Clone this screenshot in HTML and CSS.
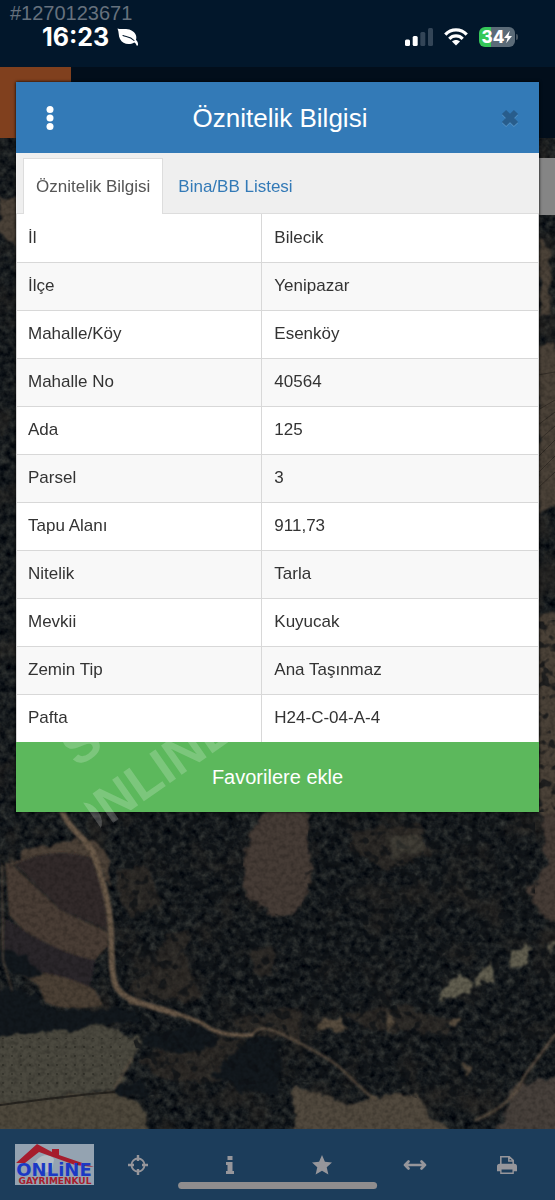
FILE: index.html
```html
<!DOCTYPE html>
<html lang="tr">
<head>
<meta charset="utf-8">
<meta name="viewport" content="width=device-width, initial-scale=1">
<title>Öznitelik Bilgisi</title>
<link rel="stylesheet" href="styles.css">
</head>
<body>
<div class="app">
  <header class="status">
    <span class="listing-no">#1270123671</span>
    <div class="status-row">
      <div class="clock">
        <span>16:23</span>
        <svg class="leaf" viewBox="0 0 22 18" aria-hidden="true"><path d="M.5.5C4 2 9 0 14 2.200C19 4.500 20 8.500 19 12C20.500 13 21.300 15 21 17.500L19.500 17.500C19.300 16 18.500 15 17.300 14.500C12 17.500 5.500 16 3 11C1.200 7.500 2.200 4 .5.5Z" fill="#fff"/><path d="M6 7.500C9 9 13 8 17 12.500" fill="none" stroke="#02172b" stroke-width="1.100" stroke-linecap="round"/></svg>
      </div>
      <div class="indicators">
        <svg class="signal" viewBox="0 0 28 18" aria-hidden="true"><rect y="11.500" width="5" height="6.500" rx="1.500" fill="#fff"/><rect x="7.700" y="8" width="5" height="10" rx="1.500" fill="#fff"/><rect x="15.300" y="4" width="5" height="14" rx="1.500" fill="#334557"/><rect x="23" width="5" height="18" rx="1.500" fill="#334557"/></svg>
        <svg class="wifi" viewBox="0 0 24 18" aria-hidden="true"><g fill="none" stroke="#fff" stroke-width="3.200"><path d="M1.300 6.600C7.200.3 16.800.3 22.700 6.600"/><path d="M5.300 10.800C9 7 15 7 18.700 10.800"/></g><path d="M8 13.600C10.300 11.600 13.700 11.600 16 13.600L12 17.600Z" fill="#fff"/></svg>
        <div class="battery"><span>34</span><svg viewBox="0 0 9 14" aria-hidden="true"><path d="M6.500 0L0 8H4L2.500 14L9 6H5Z" fill="#fff"/></svg></div>
      </div>
    </div>
  </header>

  <main class="stage">
    <svg class="map" viewBox="0 67 555 1062" preserveAspectRatio="xMidYMin slice" aria-hidden="true">
      <defs>
        <filter id="forest" x="0" y="0" width="100%" height="100%" color-interpolation-filters="sRGB">
          <feTurbulence type="fractalNoise" baseFrequency=".14" numOctaves="3" seed="7"/>
          <feColorMatrix values=".3 0 0 0 -.055  .29 0 0 0 -.033  .24 0 0 0 .003  0 0 0 0 1"/>
          <feGaussianBlur stdDeviation=".7"/>
        </filter>
        <filter id="patches" x="0" y="0" width="100%" height="100%" color-interpolation-filters="sRGB">
          <feTurbulence type="fractalNoise" baseFrequency=".025" numOctaves="4" seed="12"/>
          <feColorMatrix values="0 0 0 0 .19  0 0 0 0 .17  0 0 0 0 .15  3.500 0 0 0 -1.800"/>
        </filter>
        <filter id="trees" x="0" y="0" width="100%" height="100%" color-interpolation-filters="sRGB">
          <feTurbulence type="fractalNoise" baseFrequency=".1" numOctaves="2" seed="21"/>
          <feColorMatrix values="0 0 0 0 .055  0 0 0 0 .07  0 0 0 0 .085  7 0 0 0 -3.700"/>
          <feComposite in2="SourceGraphic" operator="in"/>
        </filter>
        <filter id="rough" x="-10%" y="-10%" width="120%" height="120%" color-interpolation-filters="sRGB">
          <feTurbulence type="fractalNoise" baseFrequency=".09" numOctaves="3" seed="3" result="n"/>
          <feDisplacementMap in="SourceGraphic" in2="n" scale="14" xChannelSelector="R" yChannelSelector="G"/>
          <feGaussianBlur stdDeviation="1"/>
        </filter>
        <filter id="soft"><feGaussianBlur stdDeviation=".8"/></filter>
        <filter id="grain" x="0" y="0" width="100%" height="100%" color-interpolation-filters="sRGB">
          <feTurbulence type="fractalNoise" baseFrequency=".22" numOctaves="2" seed="5"/>
          <feColorMatrix values="0 0 0 0 0  0 0 0 0 0  0 0 0 0 0  1.200 0 0 0 -.45"/>
        </filter>
        <pattern id="orchard" width="9" height="9" patternUnits="userSpaceOnUse"><circle cx="3" cy="3" r=".9" fill="#26261f"/></pattern>
      </defs>
      <rect y="67" width="555" height="1062" filter="url(#forest)"/>
      <rect y="67" width="555" height="1062" filter="url(#patches)" opacity=".55"/>
      <g filter="url(#rough)">
        <g fill="#3a322c" opacity=".6">
          <path d="M120 870L145 865L160 900L135 920L118 900ZM165 935L190 930L185 960L200 1000L155 1000L125 992L150 970ZM180 1030L245 1040L255 1065L215 1085L165 1080L140 1060ZM350 830L420 825L430 855L390 870L350 850ZM340 1015L400 1005L450 1020L445 1035L380 1030Z"/>
          <path d="M250 950L275 950L275 975L255 975ZM235 1020L300 1005L300 1040L250 1035Z"/>
        </g>
        <g fill="#463c36">
          <path d="M250 828L278 800L305 800L312 868L309 893L290 915L278 915L245 895L243 865Z"/>
          <path d="M542 800L560 800L560 922L539 918L528 890L546 870Z"/>
          <path d="M0 195L18 200L18 245L0 235ZM538 235L551 250L550 315L538 320ZM538 345L560 345L560 500L538 515ZM538 620L560 610L560 812L538 812Z" fill="#4b4238"/>
        </g>
        <path d="M8 862C30 845 70 840 90 840L105 850L112 890L100 868L60 855L20 868Z" fill="#4d4238"/>
      </g>
      <g filter="url(#soft)">
        <path d="M15 864C45 850 70 851 92 858L105 895L108 930L60 910Z" fill="#302a2a"/>
        <path d="M5 862L14 866L60 910L108 932L108 946L95 960C60 955 30 940 9 915Z" fill="#483e34"/>
        <path d="M3 918C25 930 55 952 95 960L90 985L101 1001L60 980L20 968L3 950Z" fill="#2c2629"/>
        <path d="M20 973C50 970 75 980 95 990L103 1005C80 1010 60 1010 45 1002L38 985Z" fill="#4b4035"/>
      </g>
      <g filter="url(#rough)">
        <path d="M-5 1037L70 1028L105 1028L142 1040L117 1090L-5 1105Z" fill="#4b493f"/>
        <path d="M-5 1105L115 1092L142 1104L150 1140L-5 1140Z" fill="#4e483c"/>
        <path d="M293 1086L345 1103L417 1092L424 1110L462 1140L293 1140Z" fill="#51493e"/>
        <path d="M513 1087L560 1076L560 1140L497 1140Z" fill="#47403b"/>
      </g>
      <path d="M0 1038H130L113 1084L0 1098Z" fill="url(#orchard)" opacity=".7"/>
      <path d="M0 1105C40 1100 80 1094 115 1092" fill="none" stroke="#282520" stroke-width="2"/>
      <g fill="none" stroke="#2f2923" opacity=".8"><path d="M538 375L555 372M538 410L555 400M538 425L555 412M538 441L555 426M538 457L555 440M538 473L555 456M538 488L555 472"/></g>
      <g filter="url(#rough)" fill="#12181d"><path d="M-5 950L22 955L40 970L35 978L10 970ZM8 985L35 995L50 1010L140 1010L138 1022L60 1030L-5 1037L-5 995ZM118 1085L145 1080L145 1098L120 1095Z"/><path d="M160 1030L205 1025L220 1040L200 1052L160 1050L135 1045ZM210 1075L255 1035L278 1040L278 1095L240 1090Z"/></g>
      <path d="M125 812H240L245 900L290 920L535 925L555 945V1030L500 1090L430 1100L290 1080L150 1095L115 980ZM310 812H535V925H300ZM538 620H555V812H538Z" filter="url(#trees)" opacity=".7"/>
      <g filter="url(#rough)">
        <path d="M322 1018L342 1018L342 1030L320 1030ZM384 1012L394 1024L388 1034ZM446 1020L460 1020L456 1028ZM464 1064L472 1068L467 1077Z" fill="#574c3e"/>
        <g fill="#625f50">
          <path d="M438 994L460 974L470 982L468 992L446 1000ZM476 978L495 958L494 984L473 987ZM507 958L528 944L524 966L510 970ZM547 945L556 942L554 952Z"/>
          <path d="M390 838L427 836L424 848L392 858Z" opacity=".35"/>
        </g>
      </g>
      <g filter="url(#soft)" fill="none" stroke="#6a5a49" stroke-linecap="round" stroke-linejoin="round">
        <path d="M62 811C70 832 88 838 95 857C101 878 108 895 110 920C113 945 109 973 117 988C126 1002 150 1005 176 1014" stroke-width="6"/>
        <path d="M130 1002C160 1007 180 1014 202 1023C215 1035 235 1036 252 1035" stroke-width="4"/>
        <path d="M252 1035C260 1020 280 1032 325 1057C345 1068 355 1085 373 1098M476 1120C500 1110 515 1098 525 1075L555 1035" stroke-width="3" opacity=".7"/>
        <path d="M115 1088L132 1058M2 865L3 960L12 990" stroke-width="2" opacity=".6"/>
      </g>
      <rect y="138" width="555" height="991" filter="url(#grain)" opacity=".4"/>
      <rect y="67" width="555" height="71" fill="#020e1b"/>
      <rect y="67" width="71" height="71" fill="#80401e"/>
      <rect x="539" y="158" width="16" height="57" fill="#858585"/>
    </svg>

    <section class="dialog" aria-labelledby="dialog-title">
      <div class="dialog-head">
        <button class="icon-button" type="button" aria-label="Menü"><svg class="dots" viewBox="0 0 8 24" aria-hidden="true"><g fill="#fff"><circle cx="4" cy="3.500" r="3.500"/><circle cx="4" cy="12" r="3.500"/><circle cx="4" cy="20.500" r="3.500"/></g></svg></button>
        <h1 id="dialog-title">Öznitelik Bilgisi</h1>
        <button class="icon-button" type="button" aria-label="Kapat"><svg class="close" viewBox="0 0 20 20" aria-hidden="true"><path d="M4 5L16 17M16 5L4 17" stroke="#5794c6" stroke-width="6"/><path d="M4 4L16 16M16 4L4 16" stroke="#285d8c" stroke-width="6"/></svg></button>
      </div>
      <nav class="tabs">
        <a class="tab active" href="#oznitelik" aria-current="page">Öznitelik Bilgisi</a>
        <a class="tab" href="#bina">Bina/BB Listesi</a>
      </nav>
      <table class="attributes" id="oznitelik">
        <tbody>
          <tr><th scope="row">İl</th><td>Bilecik</td></tr>
          <tr><th scope="row">İlçe</th><td>Yenipazar</td></tr>
          <tr><th scope="row">Mahalle/Köy</th><td>Esenköy</td></tr>
          <tr><th scope="row">Mahalle No</th><td>40564</td></tr>
          <tr><th scope="row">Ada</th><td>125</td></tr>
          <tr><th scope="row">Parsel</th><td>3</td></tr>
          <tr><th scope="row">Tapu Alanı</th><td>911,73</td></tr>
          <tr><th scope="row">Nitelik</th><td>Tarla</td></tr>
          <tr><th scope="row">Mevkii</th><td>Kuyucak</td></tr>
          <tr><th scope="row">Zemin Tip</th><td>Ana Taşınmaz</td></tr>
          <tr><th scope="row">Pafta</th><td>H24-C-04-A-4</td></tr>
        </tbody>
      </table>
      <div class="dialog-foot">
        <button class="favorite" type="button">Favorilere ekle</button>
        <svg class="watermark" viewBox="0 0 240 100" aria-hidden="true">
          <defs><clipPath id="mark-edge"><rect x="31" y="-60" width="260" height="90"/></clipPath></defs>
          <g fill="#fff">
            <g transform="translate(61 106) rotate(-35)"><text clip-path="url(#mark-edge)">ONLINE</text></g>
            <text transform="translate(61 26) rotate(-35)">S</text>
          </g>
        </svg>
      </div>
    </section>
  </main>

  <footer class="toolbar">
    <button class="logo-button" type="button" aria-label="Online Gayrimenkul">
      <svg class="logo" viewBox="0 0 79 41" aria-hidden="true">
        <rect width="79" height="41" fill="#94a3b1"/>
        <path d="M20 19C24 10 35 9 39 15L37 27L25 30Z" fill="#b3bcc3"/>
        <path d="M1 19L22 0L37 8V5H44V11L79 23L60 21L24 8L10 19Z" fill="#a61d2d"/>
        <text class="logo-name" x="39" y="32" text-anchor="middle">ONLiNE</text>
        <text class="logo-sub" x="40" y="40" text-anchor="middle">GAYRIMENKUL</text>
      </svg>
    </button>
    <button type="button" aria-label="Konum"><svg viewBox="0 0 20 20" aria-hidden="true"><g fill="none" stroke="currentColor"><circle cx="10" cy="10" r="6.500" stroke-width="1.800"/><path d="M10 0V6M10 14V20M0 10H6M14 10H20" stroke-width="2.400"/></g></svg></button>
    <button type="button" aria-label="Bilgi"><svg viewBox="0 0 20 20" aria-hidden="true"><path d="M7.500 1H12.500V5H7.500ZM6 7H12.500V16H14V19H6V16H7.500V10H6Z" fill="currentColor"/></svg></button>
    <button type="button" aria-label="Favoriler"><svg viewBox="0 0 22 22" aria-hidden="true"><path d="M11 0L14.200 7.500L22 8.200L16.200 13.500L18 21.500L11 17.300L4 21.500L5.800 13.500L0 8.200L7.800 7.500Z" fill="currentColor"/></svg></button>
    <button type="button" aria-label="Ölçüm"><svg class="wide" viewBox="0 0 24 10" aria-hidden="true"><path d="M2 5H22M5.500 1.500L2 5L5.500 8.500M18.500 1.500L22 5L18.500 8.500" fill="none" stroke="currentColor" stroke-width="2.600" stroke-linecap="round" stroke-linejoin="round"/></svg></button>
    <button type="button" aria-label="Yazdır"><svg viewBox="0 0 22 22" aria-hidden="true"><path d="M4.200 10V2H13.500L17.800 6V10M13 2V6.500H17.500" fill="none" stroke="currentColor" stroke-width="1.700"/><path d="M3 9.500H19C21 9.500 22 10.500 22 12.500V18H18.500V21H3.500V18H0V12.500C0 10.500 1 9.500 3 9.500ZM5 16V19.300H17V16Z" fill="currentColor" fill-rule="evenodd"/></svg></button>
    <span class="home-indicator"></span>
  </footer>
</div>
</body>
</html>
```
FILE: styles.css
```css
* { box-sizing: border-box; }

body {
  margin: 0;
  background: #0f1418;
  color: #333;
  font: 17px/24px "Liberation Sans", Arial, sans-serif;
}

button {
  margin: 0;
  padding: 0;
  border: 0;
  background: none;
  color: inherit;
  font: inherit;
}

svg { display: block; }

.app {
  display: flex;
  flex-direction: column;
  min-height: 100vh;
}

/* Status bar */
.status {
  display: flex;
  flex-direction: column;
  height: 67px;
  padding: 2px 40px 0 10px;
  background: #02172b;
}

.listing-no {
  color: #66717d;
  font-size: 20px;
  line-height: 22px;
}

.status-row {
  display: flex;
  justify-content: space-between;
  align-items: center;
  height: 26px;
  padding-left: 32px;
}

.clock {
  display: flex;
  align-items: center;
  gap: 8px;
  color: #fff;
  font: 700 25px/26px Inter, "Liberation Sans", sans-serif;
}

.leaf { width: 22px; height: 18px; }

.indicators {
  display: flex;
  align-items: center;
  gap: 11px;
}

.signal { width: 28px; height: 18px; }
.wifi { width: 24px; height: 18px; }

.battery {
  position: relative;
  display: flex;
  align-items: center;
  justify-content: center;
  width: 36px;
  height: 20px;
  border-radius: 6px;
  background: linear-gradient(90deg, #35c759 34%, #5b6b78 34%);
  color: #fff;
  font: 800 17px/20px Inter, "Liberation Sans", sans-serif;
}

.battery svg { width: 8px; height: 14px; }

.battery::after {
  content: "";
  position: absolute;
  right: -3px;
  top: 7px;
  width: 2px;
  height: 6px;
  border-radius: 0 2px 2px 0;
  background: #45535f;
}

/* Map and dialog */
.stage {
  position: relative;
  flex: 1;
  padding: 15px 16px 24px;
}

.map {
  position: absolute;
  inset: 0;
  width: 100%;
  height: 100%;
}

.dialog {
  position: relative;
  background: #fff;
  box-shadow: 0 0 3px #000;
}

.dialog-head {
  display: flex;
  align-items: center;
  justify-content: space-between;
  height: 71px;
  padding: 0 9px 0 14px;
  background: #337ab7;
  color: #fff;
}

.dialog-head h1 {
  margin: 0;
  font-size: 26px;
  font-weight: 400;
  line-height: 32px;
}

.icon-button {
  display: grid;
  place-items: center;
  width: 40px;
  height: 40px;
}

.dots { width: 8px; height: 24px; }
.close { width: 20px; height: 20px; }

.tabs {
  display: flex;
  height: 61px;
  padding: 5px 7px 0;
  border-bottom: 1px solid #ddd;
  background: #efefef;
}

.tab {
  padding: 16px 12px;
  border: 1px solid transparent;
  border-bottom: 0;
  margin-right: 2px;
  margin-bottom: -1px;
  color: #337ab7;
  text-decoration: none;
}

.tab.active {
  border-color: #ddd;
  background: #fff;
  color: #555;
}

.attributes {
  width: 100%;
  border-collapse: collapse;
  table-layout: fixed;
}

.attributes th,
.attributes td {
  height: 48px;
  padding: 0 11px;
  border: 1px solid #d8d8d8;
  font-weight: 400;
  text-align: left;
}

.attributes th { width: 47%; }
.attributes td { padding-left: 12px; }
.attributes tr:first-child > * { border-top: 0; }
.attributes tr:last-child > * { border-bottom: 0; }
.attributes tr:nth-child(even) { background: #f8f8f8; }

.dialog-foot { position: relative; }

.favorite {
  display: block;
  width: 100%;
  height: 70px;
  background: #5cb85c;
  color: #fff;
  font-size: 20px;
}

.watermark {
  position: absolute;
  top: 0;
  left: 0;
  width: 240px;
  height: 100px;
  opacity: .2;
  pointer-events: none;
}

.watermark text {
  font: 700 52px "Liberation Sans", Arial, sans-serif;
}

/* Bottom toolbar */
.toolbar {
  position: relative;
  display: grid;
  grid-template-columns: repeat(6, 1fr);
  height: 71px;
  background: #1c3d5b;
  color: #96969b;
}

.toolbar button {
  display: grid;
  place-items: center;
  padding-right: 4px;
}

.toolbar svg { width: 20px; height: 20px; }
.toolbar .wide { width: 24px; height: 10px; }

.toolbar .logo-button {
  justify-content: start;
  padding: 0 0 0 15px;
}

.toolbar .logo { width: 79px; height: 41px; }

.logo-name {
  fill: #1b39c4;
  font: 700 18px "DejaVu Sans", sans-serif;
}

.logo-sub {
  fill: #a61d2d;
  font: 700 9px "DejaVu Sans", sans-serif;
}

.home-indicator {
  position: absolute;
  bottom: 11px;
  left: 50%;
  width: 36%;
  height: 7px;
  border-radius: 4px;
  background: #8f8d8e;
  transform: translateX(-50%);
}
```
